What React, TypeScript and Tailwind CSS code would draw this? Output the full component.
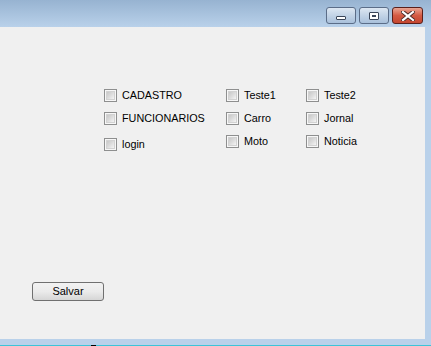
import React from "react";

type Item = { label: string; gap: string };

const col1: Item[] = [
  { label: "CADASTRO", gap: "" },
  { label: "FUNCIONARIOS", gap: "mt-[10px]" },
  { label: "login", gap: "mt-[13px]" },
];
const col2: Item[] = [
  { label: "Teste1", gap: "" },
  { label: "Carro", gap: "mt-[10px]" },
  { label: "Moto", gap: "mt-[10px]" },
];
const col3: Item[] = [
  { label: "Teste2", gap: "" },
  { label: "Jornal", gap: "mt-[10px]" },
  { label: "Noticia", gap: "mt-[10px]" },
];

function Check({ label, gap }: Item) {
  return (
    <label className={`flex items-center h-[13px] ${gap}`}>
      <span className="w-[13px] h-[13px] border border-[#8e8f8f] bg-[#f7f7f7] p-[1px] shrink-0">
        <span className="block w-full h-full bg-gradient-to-br from-[#c8c8c8] via-[#dcdcdc] to-[#f4f4f4] border border-[#d2d2d2]" />
      </span>
      <span className="ml-[5px] text-[10.8px] leading-none text-black">{label}</span>
    </label>
  );
}

function Column({ items, width }: { items: Item[]; width: string }) {
  return (
    <div className={`flex flex-col ${width}`}>
      {items.map((it) => (
        <Check key={it.label} {...it} />
      ))}
    </div>
  );
}

export default function App() {
  return (
    <div
      className="w-[431px] h-[346px] flex flex-col bg-[#b9d1ea] overflow-hidden"
      style={{ fontFamily: '"Liberation Sans", Arial, sans-serif' }}
    >
      {/* title bar */}
      <div className="h-[27px] bg-gradient-to-b from-[#97b3d1] to-[#b9d1ea] flex justify-end items-start pt-[7px] pr-[8px] gap-[3px]">
        <div className="w-[30px] h-[17px] rounded-[3px] border border-[#5b6d88] bg-gradient-to-b from-[#dde7f2] via-[#c2d3e6] to-[#a9c0db] flex items-end justify-center pb-[3px]">
          <span className="w-[10px] h-[4px] bg-white border border-[#3a4659] rounded-[1px]" />
        </div>
        <div className="w-[30px] h-[17px] rounded-[3px] border border-[#5b6d88] bg-gradient-to-b from-[#dde7f2] via-[#c2d3e6] to-[#a9c0db] flex items-center justify-center">
          <span className="w-[10px] h-[8px] border border-[#3a4659] bg-white p-[2px] rounded-[1px]">
            <span className="block w-full h-full border border-[#3a4659] bg-[#b9cbe0]" />
          </span>
        </div>
        <div className="w-[31px] h-[17px] rounded-[3px] border border-[#5a1f1a] bg-gradient-to-b from-[#e8a493] via-[#d45a43] to-[#c4452f] flex items-center justify-center">
          <svg width="14" height="10" viewBox="0 0 14 10">
            <path d="M2 1 L12 9 M12 1 L2 9" stroke="#4a2a28" strokeWidth="4" strokeLinecap="square" />
            <path d="M2 1 L12 9 M12 1 L2 9" stroke="#ffffff" strokeWidth="2.2" strokeLinecap="square" />
          </svg>
        </div>
      </div>

      {/* client area + right border */}
      <div className="flex">
        <div className="w-[425px] h-[312px] bg-[#f0f0f0] flex flex-col">
          <div className="flex pt-[62px] pl-[104px]">
            <Column items={col1} width="w-[122px]" />
            <Column items={col2} width="w-[80px]" />
            <Column items={col3} width="w-[60px]" />
          </div>
          <div className="flex pl-[32px] mt-[131px]">
            <button className="w-[72px] h-[19px] rounded-[3px] border border-[#707070] bg-gradient-to-b from-[#f2f2f2] via-[#ebebeb] to-[#d6d6d6] text-[11px] leading-none text-black">
              Salvar
            </button>
          </div>
        </div>
      </div>

      {/* bottom border */}
      <div className="h-[6px]" />
      <div className="h-[1px] bg-[#3cc4d8] relative">
        <span className="absolute left-[91px] top-0 w-[5px] h-[1px] bg-black" />
      </div>
    </div>
  );
}
